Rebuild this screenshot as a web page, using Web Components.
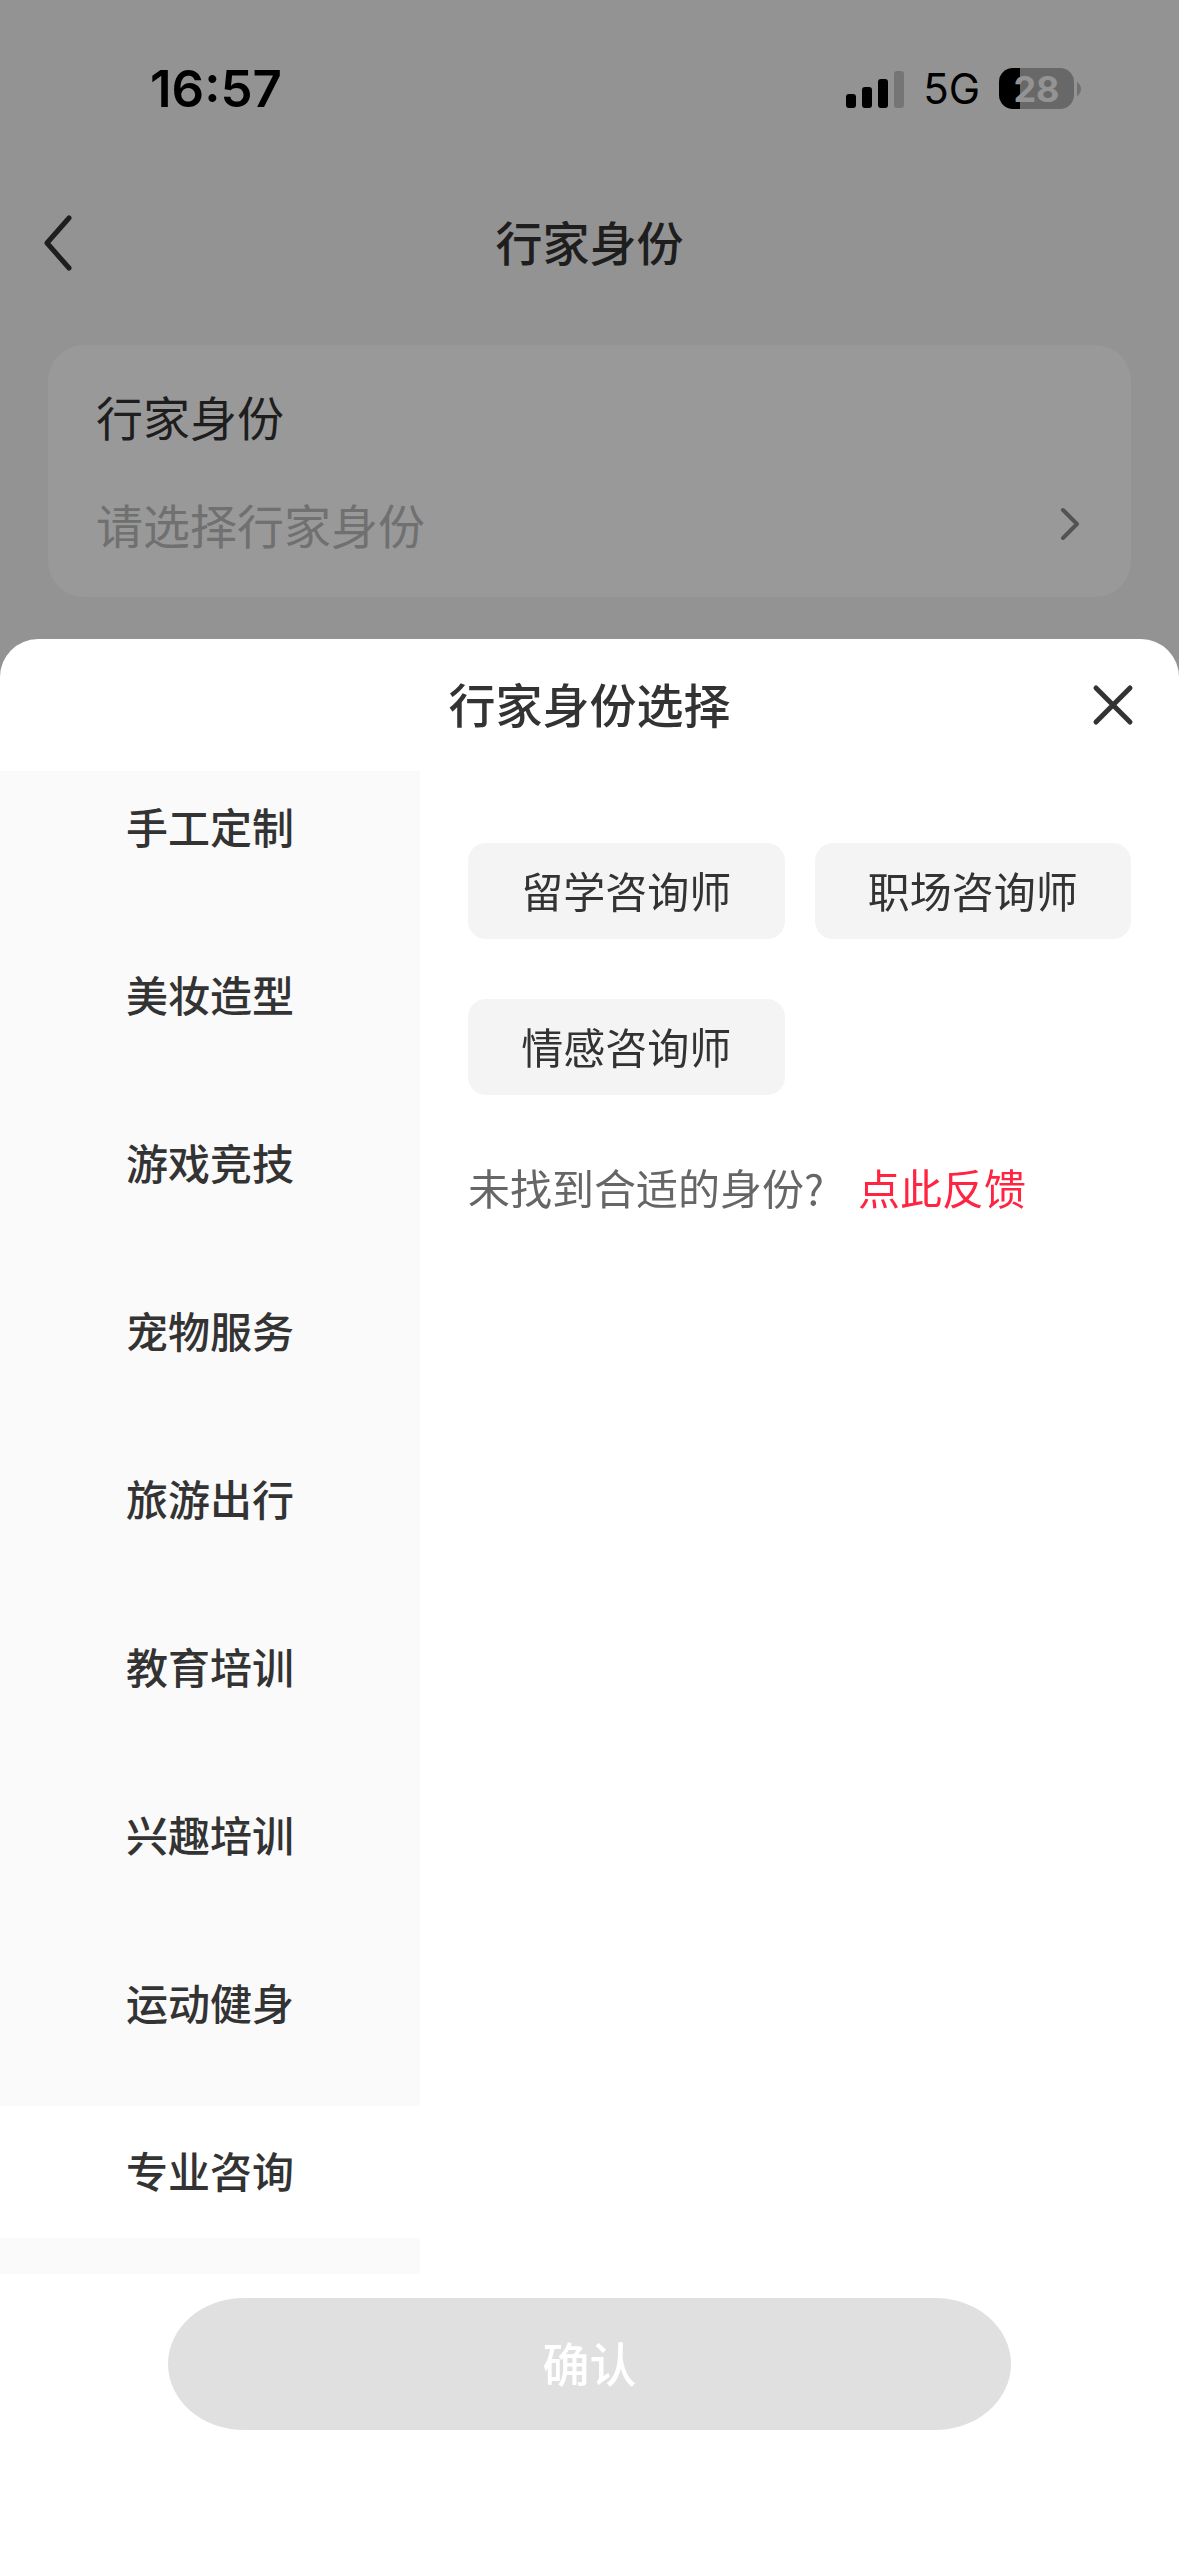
<!DOCTYPE html>
<html lang="zh-CN">
<head>
  <meta charset="UTF-8">
  <meta name="viewport" content="width=device-width, initial-scale=1.0">
  <title>行家身份</title>
  <style>
    body {
      margin: 0;
      background-color: #f5f5f5;
      color: #333;
      font-family: "Noto Sans CJK SC", sans-serif;
      font-size: 42px;
      line-height: 60px;
    }
  </style>
</head>
<body>
  <status-bar time="16:57" network="5G" battery="28"></status-bar>
  <nav-bar>行家身份</nav-bar>
  <field-card label="行家身份" placeholder="请选择行家身份"></field-card>

  <bottom-sheet heading="行家身份选择">
    <category-list slot="side">
      <category-item>手工定制</category-item>
      <category-item>美妆造型</category-item>
      <category-item>游戏竞技</category-item>
      <category-item>宠物服务</category-item>
      <category-item>旅游出行</category-item>
      <category-item>教育培训</category-item>
      <category-item>兴趣培训</category-item>
      <category-item>运动健身</category-item>
      <category-item active>专业咨询</category-item>
    </category-list>
    <option-grid>
      <option-chip>留学咨询师</option-chip>
      <option-chip>职场咨询师</option-chip>
      <option-chip>情感咨询师</option-chip>
    </option-grid>
    <feedback-line link="点此反馈">未找到合适的身份?</feedback-line>
    <confirm-button slot="footer">确认</confirm-button>
  </bottom-sheet>

  <script>
    // the CJK font sits low in its line box, the bottom padding centres it
    const reset = `
      * {
        box-sizing: border-box;
        margin: 0;
        padding: 0;
      }
      h1, h2, button {
        padding-bottom: 4px;
      }
      button {
        border: none;
        background: none;
        color: inherit;
        font: inherit;
      }
      .icon {
        padding-bottom: 0;
      }
      svg {
        display: block;
      }
    `;

    class StatusBar extends HTMLElement {
      constructor() {
        super();
        this.attachShadow({ mode: "open" });
      }

      connectedCallback() {
        this.shadowRoot.innerHTML = `
        <style>
          ${reset}
          :host {
            display: flex;
            justify-content: space-between;
            align-items: center;
            height: 177px;
            padding: 0 98px 0 150px;
            color: #000;
            font-family: Inter, sans-serif;
          }
          .time {
            font-size: 51px;
            font-weight: 600;
          }
          .right {
            display: flex;
            align-items: center;
          }
          .network {
            margin: 0 19px;
            font-size: 42px;
          }
          .battery {
            display: flex;
            justify-content: center;
            align-items: center;
            width: 75px;
            height: 41px;
            border-radius: 14px;
            background: linear-gradient(to right, #000 28%, #adadad 28%);
            color: #f5f5f5;
            font-size: 36px;
            font-weight: 700;
          }
          .tip {
            margin-left: 3px;
          }
        </style>
        <span class="time">${this.getAttribute("time")}</span>
        <div class="right">
          <svg width="58" height="38" viewBox="0 0 58 38">
            <rect x="0" y="24" width="10" height="14" rx="3"/>
            <rect x="16" y="17" width="10" height="21" rx="3"/>
            <rect x="32" y="9" width="10" height="29" rx="3"/>
            <rect x="48" y="1" width="10" height="37" rx="3" fill="#c4c4c4"/>
          </svg>
          <span class="network">${this.getAttribute("network")}</span>
          <span class="battery">${this.getAttribute("battery")}</span>
          <svg class="tip" width="4" height="14" viewBox="0 0 4 14">
            <path d="M0 0C2 1 4 4 4 7C4 10 2 13 0 14Z" fill="#bbb"/>
          </svg>
        </div>
        `;
      }
    }

    class NavBar extends HTMLElement {
      constructor() {
        super();
        this.attachShadow({ mode: "open" }).innerHTML = `
        <style>
          ${reset}
          :host {
            display: grid;
            grid-template-columns: 120px 1fr 120px;
            align-items: center;
            height: 132px;
          }
          button {
            padding-left: 41px;
          }
          h1 {
            font-size: 47px;
            font-weight: 500;
            text-align: center;
          }
        </style>
        <button class="icon" type="button" aria-label="返回">
          <svg width="34" height="60" viewBox="0 0 34 60" fill="none" stroke="#333" stroke-width="5" stroke-linecap="round" stroke-linejoin="round">
            <path d="M28 5L6 30L28 55"/>
          </svg>
        </button>
        <h1><slot></slot></h1>
        `;
      }
    }

    class FieldCard extends HTMLElement {
      constructor() {
        super();
        this.attachShadow({ mode: "open" });
      }

      connectedCallback() {
        this.shadowRoot.innerHTML = `
        <style>
          ${reset}
          :host {
            display: flex;
            flex-direction: column;
            gap: 36px;
            margin: 36px 48px;
            padding: 35px 48px 37px;
            border-radius: 36px;
            background-color: #fff;
            font-size: 47px;
            line-height: 72px;
          }
          button {
            display: flex;
            justify-content: space-between;
            align-items: center;
            padding: 0;
            color: #bbb;
          }
        </style>
        <label for="identity">${this.getAttribute("label")}</label>
        <button id="identity" type="button" aria-haspopup="dialog">
          ${this.getAttribute("placeholder")}
          <svg width="26" height="40" viewBox="0 0 26 40" fill="none" stroke="#8a8a8a" stroke-width="4" stroke-linecap="round" stroke-linejoin="round">
            <path d="M6 6L20 20L6 34"/>
          </svg>
        </button>
        `;
      }
    }

    class BottomSheet extends HTMLElement {
      constructor() {
        super();
        this.attachShadow({ mode: "open" });
      }

      connectedCallback() {
        this.shadowRoot.innerHTML = `
        <style>
          ${reset}
          :host {
            position: fixed;
            inset: 0;
            display: flex;
            flex-direction: column;
            justify-content: flex-end;
            background-color: rgba(0, 0, 0, 0.4);
          }
          .sheet {
            display: flex;
            flex-direction: column;
            height: 75vh;
            border-radius: 38px 38px 0 0;
            background-color: #fff;
            overflow: hidden;
          }
          header {
            display: grid;
            grid-template-columns: 132px 1fr 132px;
            align-items: center;
            height: 132px;
            flex: none;
          }
          h2 {
            grid-column: 2;
            font-size: 47px;
            font-weight: 500;
            text-align: center;
          }
          header button {
            display: flex;
            justify-content: center;
          }
          .body {
            display: flex;
            flex: 1;
            min-height: 0;
          }
          .content {
            flex: 1;
            padding: 72px 48px;
          }
          footer {
            flex: none;
            padding: 24px 168px 126px;
          }
        </style>
        <section class="sheet" role="dialog" aria-labelledby="heading">
          <header>
            <h2 id="heading">${this.getAttribute("heading")}</h2>
            <button class="icon" type="button" aria-label="关闭">
              <svg width="44" height="44" viewBox="0 0 44 44" fill="none" stroke="#333" stroke-width="5" stroke-linecap="round">
                <path d="M5 5L39 39M39 5L5 39"/>
              </svg>
            </button>
          </header>
          <div class="body">
            <slot name="side"></slot>
            <div class="content"><slot></slot></div>
          </div>
          <footer><slot name="footer"></slot></footer>
        </section>
        `;
      }
    }

    class CategoryList extends HTMLElement {
      constructor() {
        super();
        this.attachShadow({ mode: "open" }).innerHTML = `
        <style>
          :host {
            display: block;
            flex: none;
            width: 420px;
            background-color: #fafafa;
            overflow-y: auto;
            scrollbar-width: none;
          }
        </style>
        <slot></slot>
        `;
      }

      // keep the active category, the last one, in view
      connectedCallback() {
        this.scrollTop = this.scrollHeight;
      }
    }

    class CategoryItem extends HTMLElement {
      constructor() {
        super();
        this.attachShadow({ mode: "open" }).innerHTML = `
        <style>
          ${reset}
          :host {
            display: block;
            padding-bottom: 36px;
          }
          button {
            display: block;
            width: 100%;
            height: 132px;
            font-weight: 500;
          }
          :host([active]) button {
            background-color: #fff;
          }
        </style>
        <button type="button"><slot></slot></button>
        `;
      }
    }

    class OptionGrid extends HTMLElement {
      constructor() {
        super();
        this.attachShadow({ mode: "open" }).innerHTML = `
        <style>
          :host {
            display: grid;
            grid-template-columns: 1fr 1fr;
            gap: 60px 30px;
          }
        </style>
        <slot></slot>
        `;
      }
    }

    class OptionChip extends HTMLElement {
      constructor() {
        super();
        this.attachShadow({ mode: "open" }).innerHTML = `
        <style>
          ${reset}
          :host {
            display: block;
          }
          button {
            display: block;
            width: 100%;
            height: 96px;
            padding-bottom: 2px;
            border-radius: 18px;
            background-color: #f4f4f4;
          }
        </style>
        <button type="button"><slot></slot></button>
        `;
      }
    }

    class FeedbackLine extends HTMLElement {
      constructor() {
        super();
        this.attachShadow({ mode: "open" });
      }

      connectedCallback() {
        this.shadowRoot.innerHTML = `
        <style>
          ${reset}
          :host {
            display: flex;
            gap: 34px;
            margin-top: 62px;
            color: #666;
          }
          a {
            color: #ff2442;
            text-decoration: none;
          }
        </style>
        <span><slot></slot></span>
        <a href="#feedback">${this.getAttribute("link")}</a>
        `;
      }
    }

    class ConfirmButton extends HTMLElement {
      constructor() {
        super();
        this.attachShadow({ mode: "open" }).innerHTML = `
        <style>
          ${reset}
          :host {
            display: block;
          }
          button {
            display: block;
            width: 100%;
            height: 132px;
            border-radius: 76px / 66px;
            background-color: #e0e0e0;
            color: #fff;
            font-size: 47px;
            font-weight: 500;
          }
        </style>
        <button type="button" disabled><slot></slot></button>
        `;
      }
    }

    customElements.define("status-bar", StatusBar);
    customElements.define("nav-bar", NavBar);
    customElements.define("field-card", FieldCard);
    customElements.define("bottom-sheet", BottomSheet);
    customElements.define("category-item", CategoryItem);
    customElements.define("option-grid", OptionGrid);
    customElements.define("option-chip", OptionChip);
    customElements.define("feedback-line", FeedbackLine);
    customElements.define("confirm-button", ConfirmButton);
    // last, it measures its scroll height once the sheet is laid out
    customElements.define("category-list", CategoryList);
  </script>
</body>
</html>
